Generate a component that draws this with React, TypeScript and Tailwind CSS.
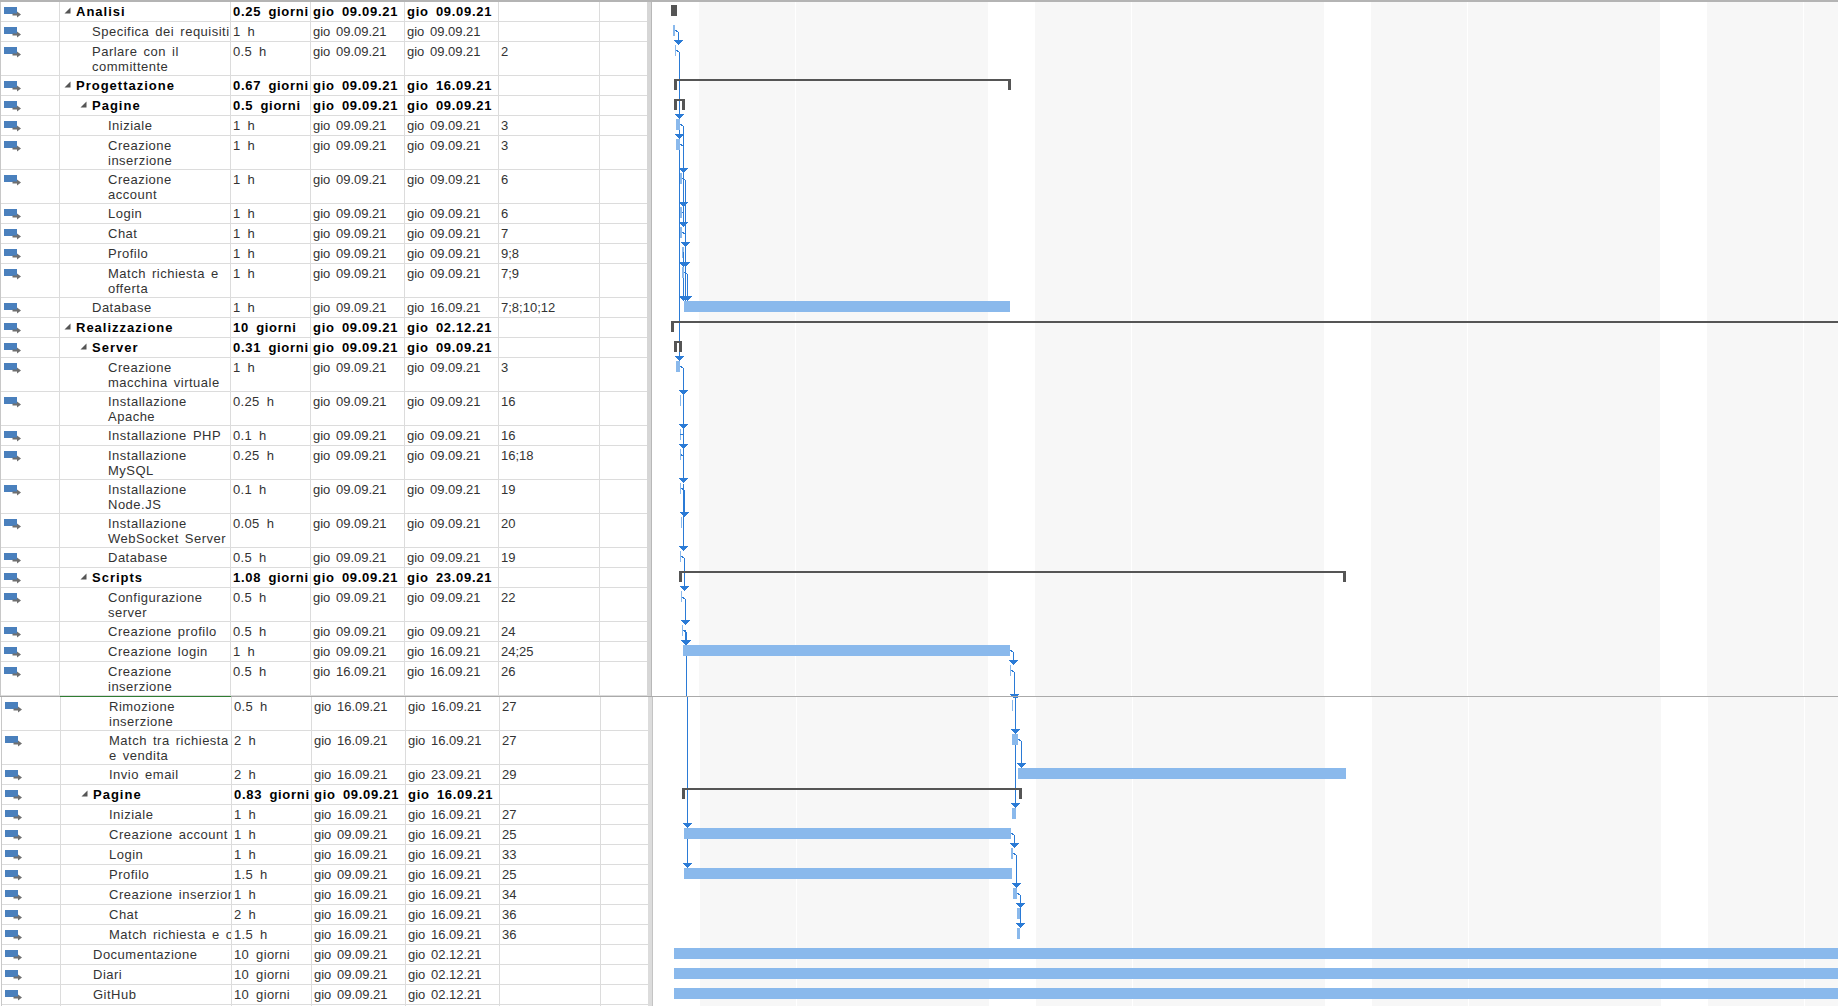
import React from "react";

type Row = { n: string[]; lvl: number; bold?: boolean; tri?: boolean; d: string; s: string; e: string; p?: string };

const top: Row[] = [
  { n: ["Analisi"], lvl: 0, bold: true, tri: true, d: "0.25 giorni", s: "gio 09.09.21", e: "gio 09.09.21" },
  { n: ["Specifica dei requisiti"], lvl: 1, d: "1 h", s: "gio 09.09.21", e: "gio 09.09.21" },
  { n: ["Parlare con il", "committente"], lvl: 1, d: "0.5 h", s: "gio 09.09.21", e: "gio 09.09.21", p: "2" },
  { n: ["Progettazione"], lvl: 0, bold: true, tri: true, d: "0.67 giorni", s: "gio 09.09.21", e: "gio 16.09.21" },
  { n: ["Pagine"], lvl: 1, bold: true, tri: true, d: "0.5 giorni", s: "gio 09.09.21", e: "gio 09.09.21" },
  { n: ["Iniziale"], lvl: 2, d: "1 h", s: "gio 09.09.21", e: "gio 09.09.21", p: "3" },
  { n: ["Creazione", "inserzione"], lvl: 2, d: "1 h", s: "gio 09.09.21", e: "gio 09.09.21", p: "3" },
  { n: ["Creazione", "account"], lvl: 2, d: "1 h", s: "gio 09.09.21", e: "gio 09.09.21", p: "6" },
  { n: ["Login"], lvl: 2, d: "1 h", s: "gio 09.09.21", e: "gio 09.09.21", p: "6" },
  { n: ["Chat"], lvl: 2, d: "1 h", s: "gio 09.09.21", e: "gio 09.09.21", p: "7" },
  { n: ["Profilo"], lvl: 2, d: "1 h", s: "gio 09.09.21", e: "gio 09.09.21", p: "9;8" },
  { n: ["Match richiesta e", "offerta"], lvl: 2, d: "1 h", s: "gio 09.09.21", e: "gio 09.09.21", p: "7;9" },
  { n: ["Database"], lvl: 1, d: "1 h", s: "gio 09.09.21", e: "gio 16.09.21", p: "7;8;10;12" },
  { n: ["Realizzazione"], lvl: 0, bold: true, tri: true, d: "10 giorni", s: "gio 09.09.21", e: "gio 02.12.21" },
  { n: ["Server"], lvl: 1, bold: true, tri: true, d: "0.31 giorni", s: "gio 09.09.21", e: "gio 09.09.21" },
  { n: ["Creazione", "macchina virtuale"], lvl: 2, d: "1 h", s: "gio 09.09.21", e: "gio 09.09.21", p: "3" },
  { n: ["Installazione", "Apache"], lvl: 2, d: "0.25 h", s: "gio 09.09.21", e: "gio 09.09.21", p: "16" },
  { n: ["Installazione PHP"], lvl: 2, d: "0.1 h", s: "gio 09.09.21", e: "gio 09.09.21", p: "16" },
  { n: ["Installazione", "MySQL"], lvl: 2, d: "0.25 h", s: "gio 09.09.21", e: "gio 09.09.21", p: "16;18" },
  { n: ["Installazione", "Node.JS"], lvl: 2, d: "0.1 h", s: "gio 09.09.21", e: "gio 09.09.21", p: "19" },
  { n: ["Installazione", "WebSocket Server"], lvl: 2, d: "0.05 h", s: "gio 09.09.21", e: "gio 09.09.21", p: "20" },
  { n: ["Database"], lvl: 2, d: "0.5 h", s: "gio 09.09.21", e: "gio 09.09.21", p: "19" },
  { n: ["Scripts"], lvl: 1, bold: true, tri: true, d: "1.08 giorni", s: "gio 09.09.21", e: "gio 23.09.21" },
  { n: ["Configurazione", "server"], lvl: 2, d: "0.5 h", s: "gio 09.09.21", e: "gio 09.09.21", p: "22" },
  { n: ["Creazione profilo"], lvl: 2, d: "0.5 h", s: "gio 09.09.21", e: "gio 09.09.21", p: "24" },
  { n: ["Creazione login"], lvl: 2, d: "1 h", s: "gio 09.09.21", e: "gio 16.09.21", p: "24;25" },
  { n: ["Creazione", "inserzione"], lvl: 2, d: "0.5 h", s: "gio 16.09.21", e: "gio 16.09.21", p: "26" },
];

const bottom: Row[] = [
  { n: ["Rimozione", "inserzione"], lvl: 2, d: "0.5 h", s: "gio 16.09.21", e: "gio 16.09.21", p: "27" },
  { n: ["Match tra richiesta", "e vendita"], lvl: 2, d: "2 h", s: "gio 16.09.21", e: "gio 16.09.21", p: "27" },
  { n: ["Invio email"], lvl: 2, d: "2 h", s: "gio 16.09.21", e: "gio 23.09.21", p: "29" },
  { n: ["Pagine"], lvl: 1, bold: true, tri: true, d: "0.83 giorni", s: "gio 09.09.21", e: "gio 16.09.21" },
  { n: ["Iniziale"], lvl: 2, d: "1 h", s: "gio 16.09.21", e: "gio 16.09.21", p: "27" },
  { n: ["Creazione account"], lvl: 2, d: "1 h", s: "gio 09.09.21", e: "gio 16.09.21", p: "25" },
  { n: ["Login"], lvl: 2, d: "1 h", s: "gio 16.09.21", e: "gio 16.09.21", p: "33" },
  { n: ["Profilo"], lvl: 2, d: "1.5 h", s: "gio 09.09.21", e: "gio 16.09.21", p: "25" },
  { n: ["Creazione inserzione"], lvl: 2, d: "1 h", s: "gio 16.09.21", e: "gio 16.09.21", p: "34" },
  { n: ["Chat"], lvl: 2, d: "2 h", s: "gio 16.09.21", e: "gio 16.09.21", p: "36" },
  { n: ["Match richiesta e offerta"], lvl: 2, d: "1.5 h", s: "gio 16.09.21", e: "gio 16.09.21", p: "36" },
  { n: ["Documentazione"], lvl: 1, d: "10 giorni", s: "gio 09.09.21", e: "gio 02.12.21" },
  { n: ["Diari"], lvl: 1, d: "10 giorni", s: "gio 09.09.21", e: "gio 02.12.21" },
  { n: ["GitHub"], lvl: 1, d: "10 giorni", s: "gio 09.09.21", e: "gio 02.12.21" },
];

const BLUE = "#2b7bd6";
const BAR = "#8ab9ec";
const DARK = "#555555";

function TaskIcon() {
  return (
    <svg width="18" height="12" viewBox="0 0 18 12" className="ml-[3px] mt-[5px] shrink-0">
      <rect x="0" y="0" width="13" height="7" fill="#4a80bd" />
      <path d="M8.5 6.5H13V4.5L17 7.5L13 10.5V8.5H8.5z" fill="#6f6f6f" />
    </svg>
  );
}

function Tri() {
  return (
    <svg width="7" height="7" viewBox="0 0 7 7" className="block">
      <path d="M6.5 0.5V6.5H0.5z" fill="#555555" />
    </svg>
  );
}

function Cell({ w, cls, text }: { w: string; cls: string; text?: string }) {
  return (
    <div className={`${w} shrink-0 h-full overflow-hidden whitespace-nowrap border-r border-[#dcdcdc] pl-[2px] pt-[2px] leading-[15px] ${cls}`}>
      {text}
    </div>
  );
}

function TableRow({ r }: { r: Row }) {
  const pad = r.lvl === 0 ? "pl-[16px]" : r.lvl === 1 ? "pl-[32px]" : "pl-[48px]";
  const nameType = r.bold
    ? "font-bold text-black tracking-[1px] [word-spacing:2px]"
    : "text-[#333333] tracking-[0.5px] [word-spacing:2px]";
  const durType = r.bold
    ? "font-bold text-black tracking-[0.7px] [word-spacing:3px]"
    : "text-[#333333] tracking-[0.35px] [word-spacing:3px]";
  const dateType = r.bold
    ? "font-bold text-black tracking-[0.7px] [word-spacing:3px]"
    : "text-[#333333] [word-spacing:2px]";
  return (
    <div className={`flex border-b border-[#dcdcdc] ${r.n.length > 1 ? "h-[34px]" : "h-[20px]"}`}>
      <div className="w-[59px] shrink-0 h-full border-r border-[#dcdcdc] overflow-hidden">
        <TaskIcon />
      </div>
      <div className={`relative w-[171px] shrink-0 h-full overflow-hidden whitespace-nowrap border-r border-[#dcdcdc] ${pad} pt-[2px] leading-[15px] ${nameType}`}>
        {r.tri && (
          <span className={`absolute top-[5px] ${r.lvl === 0 ? "left-[4px]" : "left-[20px]"}`}>
            <Tri />
          </span>
        )}
        {r.n.map((l, i) => (
          <div key={i}>{l}</div>
        ))}
      </div>
      <Cell w="w-[80px]" cls={durType} text={r.d} />
      <Cell w="w-[94px]" cls={dateType} text={r.s} />
      <Cell w="w-[94px]" cls={dateType} text={r.e} />
      <Cell w="w-[101px]" cls="text-[#333333]" text={r.p} />
      <div className="flex-1" />
    </div>
  );
}

function Filler() {
  return (
    <div className="flex flex-1">
      <div className="w-[59px] border-r border-[#dcdcdc]" />
      <div className="w-[171px] border-r border-[#dcdcdc]" />
      <div className="w-[80px] border-r border-[#dcdcdc]" />
      <div className="w-[94px] border-r border-[#dcdcdc]" />
      <div className="w-[94px] border-r border-[#dcdcdc]" />
      <div className="w-[101px] border-r border-[#dcdcdc]" />
    </div>
  );
}

function Table({ rows }: { rows: Row[] }) {
  return (
    <div className="w-[647px] shrink-0 h-full flex flex-col border-l border-[#c8c8c8] text-[13px]">
      {rows.map((r, i) => (
        <TableRow key={i} r={r} />
      ))}
      <Filler />
    </div>
  );
}

function Bands({ dx }: { dx: number }) {
  const starts = [699, 1035, 1371, 1707];
  return (
    <>
      {starts.map((s) => (
        <g key={s}>
          <rect x={s + dx} y={0} width={289} height={1100} fill="#f7f7f7" />
          <rect x={s + 96 + dx} y={0} width={1} height={1100} fill="#ffffff" />
        </g>
      ))}
    </>
  );
}

function B({ a, b, t }: { a: number; b: number; t: number }) {
  return <rect x={a} y={t + 4} width={b - a} height={11} fill={BAR} />;
}

function Sum({ a, b, t }: { a: number; b: number; t: number }) {
  return (
    <path d={`M${a} ${t + 4}H${b}V${t + 15}H${b - 3}V${t + 6}H${a + 3}V${t + 15}H${a}z`} fill={DARK} />
  );
}

function Arrow({ x, t }: { x: number; t: number }) {
  return <path d={`M${x - 4.5} ${t - 1}H${x + 4.5}L${x} ${t + 4}z`} fill={BLUE} />;
}

function Link({ a, y, x, y2 }: { a: number; y: number; x: number; y2: number }) {
  return (
    <path d={`M${a} ${y + 0.5}H${x - 2}L${x + 0.5} ${y + 2.5}V${y2}`} fill="none" stroke={BLUE} strokeWidth="1" />
  );
}

function TopChart() {
  return (
    <svg width={1186} height={694} viewBox="652 2 1186 694" className="block" shapeRendering="crispEdges">
      <Bands dx={0} />
      <rect x={671} y={5} width={6} height={11} fill={DARK} />
      <B a={673} b={675} t={21} />
      <Link a={675} y={30} x={678} y2={41} />
      <Arrow x={678.5} t={41} />
      <rect x={675} y={45} width={1} height={11} fill={BAR} />
      <Link a={676} y={50} x={679} y2={357} />
      <Sum a={674} b={1011} t={75} />
      <Sum a={674} b={685} t={95} />
      <Arrow x={679.5} t={115} />
      <B a={676} b={680} t={115} />
      <Link a={680} y={124} x={683} y2={223} />
      <Arrow x={679.5} t={135} />
      <B a={676} b={680} t={135} />
      <Link a={680} y={144} x={683} y2={150} />
      <Arrow x={683.5} t={169} />
      <B a={680} b={682} t={169} />
      <Link a={682} y={178} x={685} y2={263} />
      <Arrow x={683.5} t={203} />
      <B a={680} b={682} t={203} />
      <path d="M682 212.5H683" stroke={BLUE} strokeWidth="1" />
      <Arrow x={683.5} t={223} />
      <B a={680} b={682} t={223} />
      <Link a={682} y={232} x={685} y2={243} />
      <Arrow x={685.5} t={243} />
      <B a={682} b={684} t={243} />
      <path d="M683.5 252V297" stroke={BLUE} strokeWidth="1" />
      <Arrow x={683.5} t={263} />
      <Arrow x={685.5} t={263} />
      <B a={682} b={684} t={263} />
      <Link a={684} y={272} x={687} y2={297} />
      <path d="M685.5 263V297" stroke={BLUE} strokeWidth="1" />
      <Arrow x={683.5} t={297} />
      <Arrow x={685.5} t={297} />
      <Arrow x={687.5} t={297} />
      <B a={684} b={1010} t={297} />
      <path d="M671 321H1838V323H674V332H671z" fill={DARK} />
      <Sum a={674} b={682} t={337} />
      <Arrow x={679.5} t={357} />
      <B a={676} b={680} t={357} />
      <Link a={680} y={366} x={683} y2={479} />
      <Arrow x={683.5} t={391} />
      <rect x={680} y={395} width={1} height={11} fill={BAR} />
      <Arrow x={683.5} t={425} />
      <rect x={680} y={429} width={1} height={11} fill={BAR} />
      <path d="M680 434.5H683" stroke={BLUE} strokeWidth="1" />
      <Arrow x={683.5} t={445} />
      <rect x={680} y={449} width={1} height={11} fill={BAR} />
      <Link a={681} y={454} x={683} y2={460} />
      <Arrow x={683.5} t={479} />
      <rect x={680} y={483} width={1} height={11} fill={BAR} />
      <path d="M683.5 484V547" stroke={BLUE} strokeWidth="1" />
      <Link a={681} y={488} x={684} y2={513} />
      <Arrow x={684.5} t={513} />
      <rect x={681} y={517} width={1} height={11} fill={BAR} />
      <Arrow x={683.5} t={547} />
      <rect x={680} y={551} width={1} height={11} fill={BAR} />
      <Link a={681} y={556} x={684} y2={587} />
      <path d="M679 571H1346V582H1343V573H682V582H679z" fill={DARK} />
      <Arrow x={684.5} t={587} />
      <rect x={681} y={591} width={1} height={11} fill={BAR} />
      <Link a={682} y={597} x={685} y2={621} />
      <Arrow x={685.5} t={621} />
      <rect x={682} y={625} width={1} height={11} fill={BAR} />
      <Link a={683} y={630} x={686} y2={696} />
      <path d="M685.5 630V641" stroke={BLUE} strokeWidth="1" />
      <Arrow x={685.5} t={641} />
      <Arrow x={686.5} t={641} />
      <B a={683} b={1010} t={641} />
      <Link a={1010} y={650} x={1013} y2={661} />
      <Arrow x={1013.5} t={661} />
      <rect x={1010} y={665} width={1} height={11} fill={BAR} />
      <Link a={1011} y={670} x={1014} y2={696} />
      <Arrow x={1014.5} t={695} />
    </svg>
  );
}

function BottomChart() {
  return (
    <svg width={1185} height={309} viewBox="653 697 1185 309" className="block" shapeRendering="crispEdges">
      <Bands dx={1} />
      <path d="M687.5 697V868M1015.5 697V808" stroke={BLUE} strokeWidth="1" fill="none" />
      <path d="M1012 697H1019L1015.5 699z" fill={BLUE} />
      <rect x={1012} y={700} width={1} height={11} fill={BAR} />
      <Arrow x={1015.5} t={730} />
      <B a={1012} b={1018} t={730} />
      <Link a={1018} y={739} x={1021} y2={764} />
      <Arrow x={1021.5} t={764} />
      <B a={1018} b={1346} t={764} />
      <Sum a={682} b={1022} t={784} />
      <Arrow x={1015.5} t={804} />
      <B a={1012} b={1016} t={804} />
      <Arrow x={687.5} t={824} />
      <B a={684} b={1011} t={824} />
      <Link a={1011} y={833} x={1014} y2={844} />
      <Arrow x={1014.5} t={844} />
      <B a={1011} b={1013} t={844} />
      <Link a={1013} y={853} x={1016} y2={884} />
      <Arrow x={687.5} t={864} />
      <B a={684} b={1012} t={864} />
      <Arrow x={1016.5} t={884} />
      <B a={1013} b={1017} t={884} />
      <Link a={1017} y={893} x={1020} y2={904} />
      <Arrow x={1020.5} t={904} />
      <B a={1017} b={1020} t={904} />
      <path d="M1020.5 904V924" stroke={BLUE} strokeWidth="1" />
      <Arrow x={1020.5} t={924} />
      <B a={1017} b={1020} t={924} />
      <B a={674} b={1838} t={944} />
      <B a={674} b={1838} t={964} />
      <B a={674} b={1838} t={984} />
    </svg>
  );
}

export default function App() {
  return (
    <div
      className="w-[1838px] h-[1006px] overflow-hidden bg-white flex flex-col"
      style={{ fontFamily: '"Liberation Sans", Arial, sans-serif' }}
    >
      <div className="relative h-[697px] shrink-0 flex flex-col border-b border-[#aaaaaa]">
        <div className="h-[2px] shrink-0 bg-[#b4b4b4]" />
        <div className="flex-1 flex overflow-hidden">
          <Table rows={top} />
          <div className="w-[5px] shrink-0 bg-[#d6d6d6] border-r border-[#b8b8b8]" />
          <div className="flex-1 overflow-hidden">
            <TopChart />
          </div>
        </div>
        <span className="absolute left-[60px] -bottom-px w-[171px] h-px bg-[#2f7d32]" />
      </div>
      <div className="flex-1 flex overflow-hidden pl-px">
        <Table rows={bottom} />
        <div className="w-[5px] shrink-0 bg-[#dcdcdc] border-r border-[#c4c4c4]" />
        <div className="flex-1 overflow-hidden">
          <BottomChart />
        </div>
      </div>
    </div>
  );
}
